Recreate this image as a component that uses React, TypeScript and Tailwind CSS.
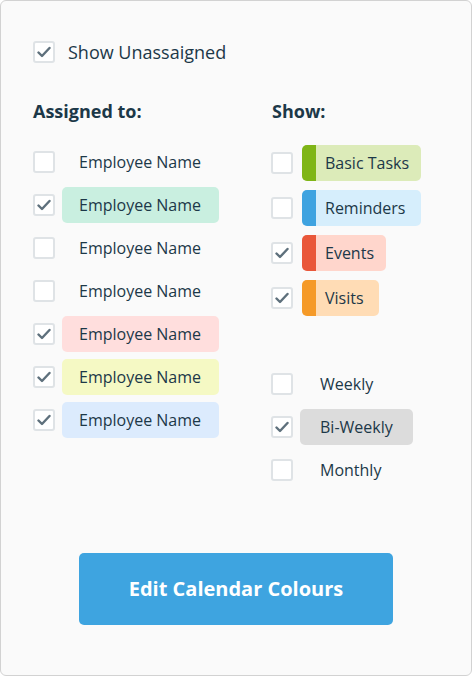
import React from "react";

function Box({ checked }: { checked?: boolean }) {
  return (
    <div className="w-[22px] h-[22px] shrink-0 rounded-[3px] border-2 border-[#dfe3e6] bg-white flex items-center justify-center">
      {checked && (
        <svg width="14" height="12" viewBox="0 0 14 12" fill="none">
          <path d="M1.5 6.5 L5 10 L12.5 2" stroke="#5e707c" strokeWidth="2.4" strokeLinecap="round" strokeLinejoin="round" />
        </svg>
      )}
    </div>
  );
}

const employees = [
  { checked: false, bg: "" },
  { checked: true, bg: "bg-[#c9efe0]" },
  { checked: false, bg: "" },
  { checked: false, bg: "" },
  { checked: true, bg: "bg-[#ffdedd]" },
  { checked: true, bg: "bg-[#f5f9c4]" },
  { checked: true, bg: "bg-[#dcebfd]" },
];

const types = [
  { label: "Basic Tasks", checked: false, bar: "bg-[#7fb517]", bg: "bg-[#dcebb9]", w: "w-[119px]" },
  { label: "Reminders", checked: false, bar: "bg-[#3fa3e0]", bg: "bg-[#d6eefc]", w: "w-[119px]" },
  { label: "Events", checked: true, bar: "bg-[#e9573a]", bg: "bg-[#ffd6cc]", w: "w-[84px]" },
  { label: "Visits", checked: true, bar: "bg-[#f59a28]", bg: "bg-[#ffdcb5]", w: "w-[77px]" },
];

const freqs = [
  { label: "Weekly", checked: false },
  { label: "Bi-Weekly", checked: true },
  { label: "Monthly", checked: false },
];

export default function App() {
  return (
    <div
      className="w-[472px] h-[676px] rounded-md border border-[#d2d2d2] bg-[#fafafa] text-[#1c3848] flex flex-col"
      style={{ fontFamily: '"Open Sans", "Noto Sans", sans-serif' }}
    >
      <div className="flex items-center gap-[13px] pl-[32px] pt-[40px]">
        <Box checked />
        <span className="text-[18px] leading-[22px]">Show Unassaigned</span>
      </div>

      <div className="flex pl-[32px] mt-[36px]">
        {/* Assigned to */}
        <div className="w-[238px] shrink-0">
          <h2 className="text-[18px] font-bold leading-[25px]">Assigned to:</h2>
          <div className="flex flex-col gap-[7px] mt-[20px]">
            {employees.map((e, i) => (
              <div key={i} className="flex items-center gap-[7px] h-[36px]">
                <Box checked={e.checked} />
                <div className={`w-[157px] h-[36px] rounded-[5px] flex items-center pl-[17px] text-[16px] ${e.bg}`}>
                  Employee Name
                </div>
              </div>
            ))}
          </div>
        </div>

        {/* Show */}
        <div>
          <h2 className="text-[18px] font-bold leading-[25px] pl-[1px]">Show:</h2>
          <div className="flex flex-col gap-[9px] mt-[21px]">
            {types.map((t) => (
              <div key={t.label} className="flex items-center gap-[9px] h-[36px]">
                <Box checked={t.checked} />
                <div className={`${t.w} h-[36px] rounded-[5px] overflow-hidden flex items-center text-[16px] ${t.bg}`}>
                  <div className={`w-[14px] h-full ${t.bar}`} />
                  <span className="pl-[9px]">{t.label}</span>
                </div>
              </div>
            ))}
          </div>
          <div className="flex flex-col gap-[7px] mt-[50px]">
            {freqs.map((f) => (
              <div key={f.label} className="flex items-center gap-[7px] h-[36px]">
                <Box checked={f.checked} />
                <div
                  className={`h-[36px] w-[113px] rounded-[5px] flex items-center pl-[20px] text-[16px] ${f.checked ? "bg-[#dcdcdc]" : ""}`}
                >
                  {f.label}
                </div>
              </div>
            ))}
          </div>
        </div>
      </div>

      <div className="flex justify-center mt-[65px]">
        <button className="w-[314px] h-[72px] rounded-[5px] bg-[#3ea4e0] text-white text-[20px] font-bold">
          Edit Calendar Colours
        </button>
      </div>
    </div>
  );
}
